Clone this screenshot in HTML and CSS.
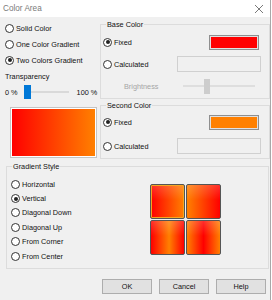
FILE: index.html
```html
<!DOCTYPE html>
<html>
<head>
<meta charset="utf-8">
<link rel="stylesheet" href="styles.css">
</head>
<body>
<div class="window">
  <div class="titlebar">
    <span class="title">Color Area</span>
    <svg class="close" width="10" height="10" viewBox="0 0 10 10"><path d="M1 1L9 9M9 1L1 9" stroke="#7a7a7a" stroke-width="1" fill="none"/></svg>
  </div>
  <div class="top">
    <div class="leftcol">
      <div class="row"><span class="radio"></span><span>Solid Color</span></div>
      <div class="row"><span class="radio"></span><span>One Color Gradient</span></div>
      <div class="row"><span class="radio on"></span><span>Two Colors Gradient</span></div>
      <div class="row label">Transparency</div>
      <div class="row">
        <span>0 %</span>
        <div class="track"><span class="thumb"></span></div>
        <span class="pct">100 %</span>
      </div>
      <div class="preview"></div>
    </div>
    <div class="rightcol">
      <div class="group base">
        <span class="glabel">Base Color</span>
        <div class="row"><span class="radio on"></span><span>Fixed</span><span class="swatch red"></span></div>
        <div class="row"><span class="radio"></span><span>Calculated</span><span class="field"></span></div>
        <div class="row"><span class="dim">Brightness</span><div class="track2"><span class="thumb2"></span></div></div>
      </div>
      <div class="group second">
        <span class="glabel">Second Color</span>
        <div class="row"><span class="radio on"></span><span>Fixed</span><span class="swatch orange"></span></div>
        <div class="row"><span class="radio"></span><span>Calculated</span><span class="field"></span></div>
      </div>
    </div>
  </div>
  <div class="group gradient">
    <span class="glabel">Gradient Style</span>
    <div class="gcontent">
      <div class="glist">
        <div class="grow"><span class="radio"></span><span>Horizontal</span></div>
        <div class="grow"><span class="radio on"></span><span>Vertical</span></div>
        <div class="grow"><span class="radio"></span><span>Diagonal Down</span></div>
        <div class="grow"><span class="radio"></span><span>Diagonal Up</span></div>
        <div class="grow"><span class="radio"></span><span>From Corner</span></div>
        <div class="grow"><span class="radio"></span><span>From Center</span></div>
      </div>
      <div class="squares">
        <div class="sq sq1"></div>
        <div class="sq sq2"></div>
        <div class="sq sq3"></div>
        <div class="sq sq4"></div>
      </div>
    </div>
  </div>
  <div class="buttons">
    <div class="btn">OK</div>
    <div class="btn">Cancel</div>
    <div class="btn">Help</div>
  </div>
</div>
</body>
</html>
```
FILE: styles.css
```css
html, body {
  margin: 0;
  padding: 0;
  background: #ffffff;
}
.window {
  width: 271px;
  height: 300px;
  box-sizing: border-box;
  background: #f0f0f0;
  border-right: 1px solid #a8a8a8;
  font-family: "Liberation Sans", Arial, sans-serif;
  font-size: 7.3px;
  color: #111;
  overflow: hidden;
}
.titlebar {
  height: 17px;
  background: #ffffff;
  display: flex;
  align-items: center;
  justify-content: space-between;
  padding: 0 6px 0 3px;
}
.title {
  font-size: 8.2px;
  color: #7a7a7a;
}
.close {
  display: block;
}
.top {
  display: flex;
  padding-top: 3px;
}
.leftcol {
  width: 95px;
  margin-left: 5px;
}
.row {
  height: 16px;
  display: flex;
  align-items: center;
  white-space: nowrap;
}
.radio {
  width: 9px;
  height: 9px;
  box-sizing: border-box;
  border: 1px solid #333;
  border-radius: 50%;
  background: #fff;
  margin-right: 2px;
  display: flex;
  align-items: center;
  justify-content: center;
  flex: none;
}
.radio.on::after {
  content: "";
  width: 4px;
  height: 4px;
  border-radius: 50%;
  background: #222;
}
.track {
  width: 45px;
  height: 16px;
  margin-left: 6px;
  display: flex;
  align-items: center;
  background: linear-gradient(#d9d9d9, #d9d9d9) no-repeat center / 100% 2px;
}
.thumb {
  width: 7px;
  height: 14px;
  background: #0078d7;
}
.pct {
  margin-left: 8px;
}
.preview {
  margin: 7px 0 0 5px;
  width: 87px;
  height: 51px;
  box-sizing: border-box;
  border: 1px solid #c4c4c4;
  padding: 1px;
  background: linear-gradient(to right, #ff0000, #ff8000) content-box, #ffffff;
}
.rightcol {
  width: 170px;
  margin-top: 4px;
  display: flex;
  flex-direction: column;
  gap: 6px;
}
.group {
  position: relative;
  border: 1px solid #dcdcdc;
  box-sizing: border-box;
}
.glabel {
  position: absolute;
  top: -5px;
  left: 5px;
  background: #f0f0f0;
  padding: 0 1px;
  line-height: 9px;
}
.base {
  padding: 9px 0 4px 2px;
  display: flex;
  flex-direction: column;
  gap: 6px;
}
.second {
  padding: 8px 0 4px 2px;
  display: flex;
  flex-direction: column;
  gap: 8px;
}
.swatch {
  margin-left: auto;
  margin-right: 10px;
  width: 50px;
  height: 15px;
  box-sizing: border-box;
  border: 1px solid #8f8f8f;
  padding: 1px;
}
.swatch.red {
  background: linear-gradient(#ff0000, #ff0000) content-box, #e0e0e0;
}
.swatch.orange {
  background: linear-gradient(#ff8000, #ff8000) content-box, #e0e0e0;
}
.field {
  margin-left: auto;
  margin-right: 8px;
  width: 84px;
  height: 16px;
  box-sizing: border-box;
  border: 1px solid #d0d0d0;
  background: #f0f0f0;
}
.dim {
  color: #a5a5a5;
  margin-left: 21px;
}
.track2 {
  margin-left: auto;
  margin-right: 14px;
  width: 72px;
  height: 16px;
  padding-left: 21px;
  box-sizing: border-box;
  display: flex;
  align-items: center;
  background: linear-gradient(#dedede, #dedede) no-repeat center / 100% 2px;
}
.thumb2 {
  width: 6px;
  height: 15px;
  background: #cdcdcd;
}
.gradient {
  margin: 7px 0 0 6px;
  width: 263px;
  height: 103px;
  padding: 10px 0 0 4px;
}
.gcontent {
  display: flex;
  align-items: flex-start;
}
.glist {
  width: 139px;
}
.grow {
  height: 14.4px;
  display: flex;
  align-items: center;
  white-space: nowrap;
}
.squares {
  margin-top: 7px;
  display: grid;
  grid-template-columns: 35px 35px;
  grid-template-rows: 35px 35px;
  gap: 1px;
}
.sq {
  box-sizing: border-box;
  border: 1px solid #555;
  border-radius: 2px;
}
.sq1 {
  background: linear-gradient(rgba(255,255,255,0.18), rgba(255,255,255,0) 45%), linear-gradient(to right, #ff0000, #ff8000);
  box-shadow: inset 0 0 0 1px #f5a623;
}
.sq2 {
  background: linear-gradient(rgba(255,255,255,0.18), rgba(255,255,255,0) 45%), linear-gradient(to right, #ff8000, #ff0000);
}
.sq3 {
  background: linear-gradient(rgba(255,255,255,0.18), rgba(255,255,255,0) 45%), linear-gradient(to right, #ff0000, #ff8000 55%, #ff0000);
}
.sq4 {
  background: linear-gradient(rgba(255,255,255,0.18), rgba(255,255,255,0) 45%), linear-gradient(to right, #ff8000, #ff0000 50%, #ff8000);
}
.buttons {
  margin-top: 10px;
  display: flex;
  justify-content: flex-end;
  gap: 7px;
  padding-right: 4px;
}
.btn {
  width: 50px;
  height: 15px;
  box-sizing: border-box;
  border: 1px solid #adadad;
  background: #e1e1e1;
  display: flex;
  align-items: center;
  justify-content: center;
}
```
